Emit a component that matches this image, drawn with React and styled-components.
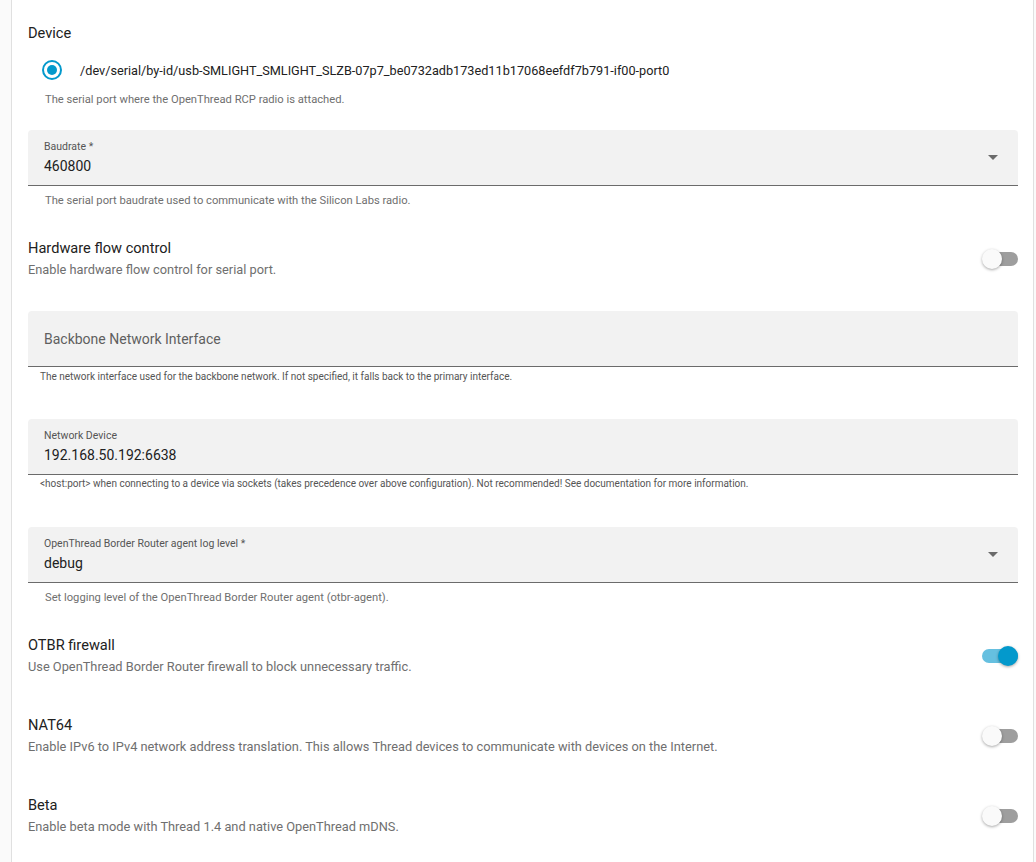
import React from 'react';
import styled, { createGlobalStyle } from "styled-components";

const GlobalStyle = createGlobalStyle`
body {
  margin: 0;
  background-color: #fafafa;
  font-family: Roboto, "Noto Sans", sans-serif;
  color: #212121;
}
`;

const Page = styled.div`
height: 862px;
overflow: hidden;
padding: 0 2px 0 11px;
`;

const Card = styled.div`
background-color: #ffffff;
border-left: 1px solid #e0e0e0;
border-right: 1px solid #e0e0e0;
padding: 21px 15px 40px 16px;
min-height: 100%;
box-sizing: border-box;
`;

const Title = styled.div`
font-size: 14.6px;
line-height: ${p => p.$lh || 20}px;
color: #212121;
`;

const Description = styled.div`
font-size: 12.8px;
line-height: 21px;
margin-top: 1px;
color: #6f6f6f;
`;

const RadioRow = styled.label`
display: flex;
flex-direction: row;
align-items: center;
height: 40px;
margin-top: 5px;
font-size: 12.7px;
color: #212121;
`;

const RadioBox = styled.span`
width: 40px;
height: 40px;
margin-left: 4px;
margin-right: 8px;
display: flex;
justify-content: center;
align-items: center;
`;

const RadioOuter = styled.span`
width: 20px;
height: 20px;
box-sizing: border-box;
border: 2px solid #0399cc;
border-radius: 50%;
display: flex;
justify-content: center;
align-items: center;
&::after {
  content: "";
  width: 10px;
  height: 10px;
  border-radius: 50%;
  background-color: #0399cc;
}
`;

const Helper = styled.div`
font-size: ${p => (p.$small ? 10 : 11.2)}px;
line-height: ${p => (p.$small ? 12 : 16)}px;
color: ${p => (p.$small ? '#555555' : '#6f6f6f')};
padding-left: ${p => (p.$small ? 12 : 17)}px;
margin-top: ${p => p.$mt}px;
white-space: nowrap;
`;

const Field = styled.div`
display: flex;
flex-direction: row;
justify-content: space-between;
align-items: center;
height: 56px;
box-sizing: border-box;
border-bottom: 1px solid #6b6b6b;
border-radius: 4px 4px 0 0;
background-color: #f2f2f2;
padding: 0 16px;
margin-top: ${p => p.$mt}px;
`;

const FieldText = styled.div`
display: flex;
flex-direction: column;
`;

const FieldLabel = styled.span`
font-size: ${p => (p.$placeholder ? 14 : 10.5)}px;
line-height: 16px;
color: ${p => (p.$placeholder ? '#5f5f5f' : '#555555')};
`;

const FieldValue = styled.span`
font-size: 14px;
line-height: 22px;
color: #212121;
`;

const Arrow = styled.span`
margin-right: 4px;
width: 0;
height: 0;
border-left: 5px solid transparent;
border-right: 5px solid transparent;
border-top: 5px solid #6b6b6b;
`;

const ToggleRow = styled.div`
display: flex;
flex-direction: row;
justify-content: space-between;
align-items: center;
margin-top: ${p => p.$mt}px;
`;

const Switch = styled.span`
position: relative;
width: 36px;
height: 20px;
flex-shrink: 0;
`;

const Track = styled.span`
position: absolute;
left: ${p => (p.$on ? 0 : 6)}px;
right: 0;
top: 3px;
height: 14px;
border-radius: 7px;
background-color: ${p => (p.$on ? '#66c0e0' : '#9e9e9e')};
`;

const Thumb = styled.span`
position: absolute;
top: 0;
left: ${p => (p.$on ? 16 : 0)}px;
width: 20px;
height: 20px;
border-radius: 50%;
background-color: ${p => (p.$on ? '#0399cc' : '#fafafa')};
box-shadow: 0 1px 3px rgba(0, 0, 0, 0.35);
`;

const Toggle = ({title, description, on, mt}) => (
    <ToggleRow $mt={mt}>
        <div>
            <Title>{title}</Title>
            <Description>{description}</Description>
        </div>
        <Switch>
            <Track $on={on} />
            <Thumb $on={on} />
        </Switch>
    </ToggleRow>
);

const App = () => {
    return (
        <Page>
            <GlobalStyle />
            <Card>
                <Title $lh={24}>Device</Title>
                <RadioRow>
                    <RadioBox><RadioOuter /></RadioBox>
                    /dev/serial/by-id/usb-SMLIGHT_SMLIGHT_SLZB-07p7_be0732adb173ed11b17068eefdf7b791-if00-port0
                </RadioRow>
                <Helper $mt={2}>The serial port where the OpenThread RCP radio is attached.</Helper>

                <Field $mt={22}>
                    <FieldText>
                        <FieldLabel>Baudrate *</FieldLabel>
                        <FieldValue>460800</FieldValue>
                    </FieldText>
                    <Arrow />
                </Field>
                <Helper $mt={7}>The serial port baudrate used to communicate with the Silicon Labs radio.</Helper>

                <Toggle mt={29} title="Hardware flow control" description="Enable hardware flow control for serial port." />

                <Field $mt={31}>
                    <FieldLabel $placeholder>Backbone Network Interface</FieldLabel>
                </Field>
                <Helper $small $mt={4}>The network interface used for the backbone network. If not specified, it falls back to the primary interface.</Helper>

                <Field $mt={36}>
                    <FieldText>
                        <FieldLabel>Network Device</FieldLabel>
                        <FieldValue>192.168.50.192:6638</FieldValue>
                    </FieldText>
                </Field>
                <Helper $small $mt={3}>{'<host:port> when connecting to a device via sockets (takes precedence over above configuration). Not recommended! See documentation for more information.'}</Helper>

                <Field $mt={37}>
                    <FieldText>
                        <FieldLabel>OpenThread Border Router agent log level *</FieldLabel>
                        <FieldValue>debug</FieldValue>
                    </FieldText>
                    <Arrow />
                </Field>
                <Helper $mt={7}>Set logging level of the OpenThread Border Router agent (otbr-agent).</Helper>

                <Toggle mt={29} on title="OTBR firewall" description="Use OpenThread Border Router firewall to block unnecessary traffic." />
                <Toggle mt={38} title="NAT64" description="Enable IPv6 to IPv4 network address translation. This allows Thread devices to communicate with devices on the Internet." />
                <Toggle mt={38} title="Beta" description="Enable beta mode with Thread 1.4 and native OpenThread mDNS." />
            </Card>
        </Page>
    );
};

export default App;
